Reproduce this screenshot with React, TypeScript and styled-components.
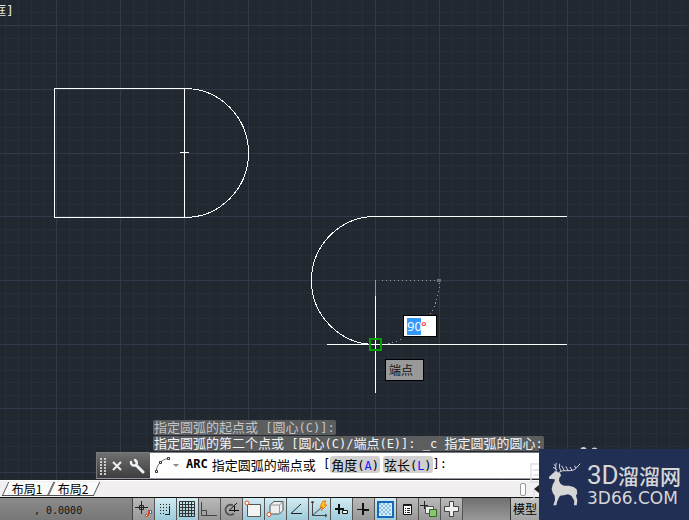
import React, { Fragment, ReactNode } from "react";
import styled, { createGlobalStyle, css } from "styled-components";

const cjk = `"Noto Sans CJK SC", sans-serif`;
const mono = `"DejaVu Sans Mono", "Noto Sans CJK SC", monospace`;

const GlobalStyle = createGlobalStyle`
  * { box-sizing: border-box; }
  body { margin: 0; background: #212830; font-family: ${cjk}; }
  button, input { font: inherit; color: inherit; margin: 0; padding: 0; border: 0; border-radius: 0; background: none; }
`;

const Window = styled.div`
  position: relative;
  display: flex;
  flex-direction: column;
  min-height: 100vh;
  overflow: hidden;
`;

const Canvas = styled.main`
  position: relative;
  flex: 1;
  background: #212830;
  overflow: hidden;
`;

const Drawing = styled.svg`
  position: absolute;
  inset: 0;
  width: 100%;
  height: 100%;
  shape-rendering: crispEdges;
  fill: none;
`;

const ViewLabel = styled.div`
  position: absolute;
  top: 2px;
  left: -7px;
  font: 13px/17px ${mono};
  color: #e4e4e4;
  white-space: nowrap;
`;

const AngleField = styled.label`
  position: absolute;
  left: 403px;
  top: 315px;
  display: flex;
  align-items: center;
  width: 34px;
  height: 22px;
  padding-left: 3px;
  border: 1px solid #000;
  background: #fff;
  color: #f00;
  font: 13px/17px "Open Sans", sans-serif;
`;

const AngleInput = styled.input`
  width: 14px;
  height: 17px;
  background: #3399ff;
  color: #fff;
  font: 13px/17px "Open Sans", sans-serif;
`;

const Tooltip = styled.div`
  position: absolute;
  left: 385px;
  top: 359px;
  width: 39px;
  height: 22px;
  padding-left: 3px;
  border: 1px solid #000;
  background: #999;
  color: #111;
  font: 12px/20px ${cjk};
`;

const CommandDock = styled.section`
  position: absolute;
  left: 96px;
  right: 148px;
  bottom: 1px;
  display: flex;
  flex-direction: column;
  align-items: flex-start;
  gap: 1px;
`;

const HistoryLine = styled.div<{ $dim?: boolean }>`
  margin-left: 57px;
  padding: 0 1px;
  height: 15px;
  border-radius: 2px;
  background: #5b5d5f;
  color: ${(p) => (p.$dim ? "#c4c4c4" : "#f4f4f4")};
  font: 13px/14px ${cjk};
  white-space: pre;
`;

const Latin = styled.span`
  font-family: ${mono};
  font-size: 12px;
`;

const CommandBar = styled.div`
  display: flex;
  align-self: stretch;
  height: 27px;
  border: 1px solid #77797c;
  border-bottom-color: #999;
  background: #fff;
  color: #000;
  font: 13px/17px ${cjk};
`;

const CommandTools = styled.div`
  display: flex;
  flex: none;
  align-items: center;
  gap: 6px;
  width: 53px;
  padding-left: 3px;
  background: linear-gradient(#707070, #3c3c3c);
`;

const IconButton = styled.button`
  display: flex;
  align-items: center;
  justify-content: center;
`;

const Prompt = styled.div`
  display: flex;
  flex: 1;
  min-width: 0;
  align-items: center;
  padding: 0 0 2px 4px;
  white-space: pre;
`;

const CommandName = styled(Latin)`
  margin: 0 4px 0 6px;
`;

const Option = styled.button`
  height: 17px;
  padding: 0 1px;
  margin-right: 3px;
  border-radius: 3px;
  background: #d0d0d0;
  &:last-of-type { margin-right: 0; }
  b { font-weight: 400; color: #1a1aff; }
`;

const CommandInput = styled.input`
  flex: 1;
  min-width: 0;
`;

const TabStrip = styled.nav`
  display: flex;
  justify-content: space-between;
  height: 18px;
  padding-left: 5px;
  border-top: 1px solid #fff;
  border-bottom: 1px solid #111;
  background: #f1eff0;
`;

const Tabs = styled.div`
  display: flex;
`;

const Tab = styled.button`
  position: relative;
  width: 46px;
  height: 15px;
  padding-right: 2px;
  color: #000;
  font: 12px/14px ${cjk};
  z-index: 0;
  &::before {
    content: "";
    position: absolute;
    z-index: -1;
    inset: 1px 0 0 0;
    border: solid #555;
    border-width: 0 1px 1px 1px;
    background: #fafafa;
    transform: skewX(-25deg);
  }
`;

const ScrollEnd = styled.div`
  display: flex;
  align-items: center;
  gap: 8px;
  margin-right: 150px;
`;

const ScrollThumb = styled.span`
  width: 6px;
  height: 13px;
  border: 1px solid #999;
  border-radius: 2px;
  background: #fff;
`;

const StatusBar = styled.footer`
  display: flex;
  height: 22px;
  background: linear-gradient(#777, #949494);
`;

const Coordinates = styled.output`
  width: 133px;
  padding-left: 34px;
  border-right: 1px solid #444;
  background: linear-gradient(#8b8b8b, #777);
  color: #111;
  font: 10px/25px ${mono};
  white-space: pre;
`;

const Toggle = styled.button<{ $on?: boolean }>`
  display: flex;
  align-items: center;
  width: 22px;
  border-right: 1px solid #555;
  ${(p) =>
    p.$on
      ? css`background: linear-gradient(#d3ebf2, #9dcbda);`
      : css`background: linear-gradient(#b9b9b9, #989898);`}
`;

const ToggleIcon = styled.svg`
  width: 20px;
  height: 20px;
  flex: none;
  fill: none;
  stroke: #222;
`;

const Spacer = styled.div`
  width: 48px;
  border-right: 1px solid #333;
  background: linear-gradient(#707070, #999);
`;

const ModelButton = styled.button`
  width: 28px;
  background: linear-gradient(#c4c4c4, #a4a4a4);
  color: #000;
  font: 12px/22px ${cjk};
`;

const Brand = styled.aside`
  position: absolute;
  right: 0;
  bottom: 0;
  display: flex;
  align-items: center;
  gap: 6px;
  width: 150px;
  height: 71px;
  padding-left: 9px;
  background: #222f55;
  color: #d6d6d6;
`;

const BrandEdge = styled.svg`
  position: absolute;
  right: 100%;
  top: 14px;
`;

const BrandText = styled.div`
  display: flex;
  flex-direction: column;
  white-space: nowrap;
`;

const BrandName = styled.div`
  display: flex;
  align-items: center;
  height: 26px;
  font: 500 21px/24px ${cjk};
  span { width: 31px; font: 26px/24px Roboto, sans-serif; }
`;

const BrandSite = styled.div`
  font: 17px/20px "DejaVu Sans", sans-serif;
`;

const STEP = 12.76;
const gridLines = (count: number, origin: number, first: number) =>
  Array.from({ length: count }, (_, i) => i + first).map((n) => ({
    at: Math.round(origin + n * STEP) + 0.5,
    major: n % 5 === 0,
  }));
const columns = gridLines(160, 56.2, -4);
const rows = gridLines(120, 25, -1);

const GridLines = ({ major }: { major: boolean }) => (
  <g stroke={major ? "#32394a" : "#272e39"}>
    {rows.filter((r) => r.major === major).map((r) => (
      <line key={`r${r.at}`} x1="0" x2="100%" y1={r.at} y2={r.at} />
    ))}
    {columns.filter((c) => c.major === major).map((c) => (
      <line key={`c${c.at}`} y1="0" y2="100%" x1={c.at} x2={c.at} />
    ))}
  </g>
);

const Model = () => (
  <Drawing aria-label="Drawing area">
    <GridLines major={false} />
    <GridLines major />
    <g stroke="#fff">
      <path d="M184.5 88.5H54.5V217.5H184.5V88.5M180 152.5H189" />
      <path d="M184.5 88.5A64 64.5 0 0 1 184.5 217.5" />
      <path d="M567 216.5H375.5A64 64 0 0 0 375.5 344.5M327 344.5H567M375.5 296V393" />
    </g>
    <path d="M375.5 280V296" stroke="#999" />
    <path d="M382 280.5H437" stroke="#999" strokeDasharray="1 3" />
    <path d="M439.5 283A64 64 0 0 1 380 344.5" stroke="#999" strokeDasharray="1 3" />
    <circle cx="439" cy="280.5" r="2" fill="#6b6f76" />
    <rect x="370" y="339" width="11" height="11" stroke="#00a000" strokeWidth="2" />
    <g fill="#ccc" shapeRendering="auto">
      <ellipse cx="583.5" cy="449.5" rx="3" ry="2.5" />
      <ellipse cx="594.5" cy="450" rx="3" ry="2.5" />
    </g>
  </Drawing>
);

/* Latin runs are set in the monospaced face, Chinese runs in the CJK one. */
const Mixed = ({ text }: { text: string }) => (
  <>
    {text.split(/([\u4e00-\u9fff]+)/).map((run, i) =>
      i % 2 ? <Fragment key={i}>{run}</Fragment> : run && <Latin key={i}>{run}</Latin>
    )}
  </>
);

const toggles: { label: string; on?: boolean; icon: ReactNode }[] = [
  { label: "推断约束", icon: <><path d="M2 8.5h13M8.5 2v13" /><path d="M6.5 6.5h4v4h-4z" /><path d="M15.5 11v6" stroke="#d04a20" /><path d="M16.5 11.5h2v3h-2z" stroke="#1f6fc4" fill="#fff" /><path d="M12.5 15.5h2v2h-2z" stroke="#d04a20" fill="#fff" /></> },
  { label: "捕捉模式", on: true, icon: <><path d="M5 5.5h11M5 8.5h8M5 11.5h8M5 14.5h5" strokeDasharray="1 2" /><path d="M14.5 7v8M10 15.5h5" /></> },
  { label: "栅格显示", on: true, icon: <path d="M2.5 2.5h15v15h-15zM5.5 2v16M8.5 2v16M11.5 2v16M14.5 2v16M2 5.5h16M2 8.5h16M2 11.5h16M2 14.5h16" stroke="#333" /> },
  { label: "正交模式", icon: <path d="M2.5 3v13.5H18M2.5 11.5h5v5" stroke="#444" /> },
  { label: "极轴追踪", icon: <><path d="M12 6.5a5 5 0 1 0 1 8" stroke="#555" strokeWidth="2" /><path d="M8 11.5h10M8 11.5L16 4M13.5 7v6" stroke="#111" /></> },
  { label: "对象捕捉", on: true, icon: <><path d="M4.5 5.5h13v12h-13z" fill="#f3f3f3" stroke="#555" /><circle cx="4" cy="4" r="2" fill="#fff" stroke="#e2531b" /></> },
  { label: "三维对象捕捉", on: true, icon: <><path d="M5 6l4-3.5h9v9L14.5 15H5z" fill="#eee" stroke="#555" /><path d="M5 6h9.5v9M14.5 6L18 2.5" stroke="#999" /><circle cx="4" cy="15.5" r="2" fill="#fff" stroke="#e2531b" /></> },
  { label: "对象捕捉追踪", on: true, icon: <path d="M14 5L4 14.5h11" /> },
  { label: "动态 UCS", on: true, icon: <><path d="M3.5 2v14.5H18M3.5 16.5L13 8M2 4l1.5-2L5 4M16 15l2 1.5-2 1.5" stroke="#444" /><path d="M14 2l-3 6h3l-2 4 6-6h-3l2-4z" fill="#ffd21f" stroke="#e87a10" /></> },
  { label: "动态输入", on: true, icon: <><path d="M4 10h9M8 5v10" stroke="#111" strokeWidth="2" /><path d="M11.5 11.5h5v3h-5z" fill="#fff" stroke="#111" /></> },
  { label: "线宽", icon: <><path d="M4 10.5h6" stroke="#111" /><path d="M9 11h7M10 4v12" stroke="#111" strokeWidth="2" /></> },
  { label: "透明度", on: true, icon: <><path d="M3 3h15v15H3z" fill="#d9eefb" stroke="#1668b8" strokeWidth="2" /><path d="M4 5h12M4 9h12M4 13h12" stroke="#8dbfe0" strokeWidth="2" strokeDasharray="2 2" /><path d="M6 7h11M6 11h11M6 15h11" stroke="#8dbfe0" strokeWidth="2" strokeDasharray="2 2" /></> },
  { label: "快捷特性", icon: <><path d="M6.5 5.5h8v10h-8z" fill="#fff" stroke="#111" /><path d="M7 6.5h7" /><path d="M8 9.5h1M10 9.5h3M8 11.5h1M10 11.5h3M8 13.5h1M10 13.5h3" /></> },
  { label: "选择循环", icon: <><path d="M1 6.5h8M5.5 2v8" /><path d="M6.5 7.5h8v7h-8z" fill="#eee" stroke="#555" /><path d="M10.5 10.5h7v7h-7z" fill="#8bc56f" stroke="#2f6b18" /></> },
  { label: "注释监视器", icon: <path d="M8.5 2.5h4v5h5v5h-5v5h-4v-5h-5v-5h5z" fill="#eee" stroke="#444" /> },
];

const Deer = () => (
  <svg width="33" height="45" viewBox="0 0 99 135" fill="none" aria-hidden="true">
    <path
      fill="#d6d6d6"
      d="M3 45L13 35 20 30 20 26 27 30 35 32 39 38 38 43 34 47 33 56 38 66 48 71 63 71 77 75 86 82 88 94 84 101 88 115 86 130 78 130 79 116 70 101 60 97 47 100 36 101 31 110 27 120 25 130 16 130 21 114 20 101 14 92 11 80 14 68 20 57 20 52 12 51 4 51Z"
    />
    <path
      stroke="#d6d6d6"
      strokeWidth="3"
      d="M28 32Q20 21 25 3M24 13L17 7M26 22L15 16M33 31Q43 24 57 26 78 27 84 19 91 11 97 5M39 27Q32 19 35 5M49 26L41 11M61 26L53 13M72 25L66 15M83 20L80 11"
    />
  </svg>
);

export default function App() {
  return (
    <>
      <GlobalStyle />
      <Window>
        <Canvas>
          <Model />
          <ViewLabel>框]</ViewLabel>
          <AngleField>
            <AngleInput aria-label="角度" defaultValue="90" />°
          </AngleField>
          <Tooltip role="tooltip">端点</Tooltip>
          <CommandDock>
            <HistoryLine $dim><Mixed text="指定圆弧的起点或 [圆心(C)]:" /></HistoryLine>
            <HistoryLine><Mixed text="指定圆弧的第二个点或 [圆心(C)/端点(E)]: _c 指定圆弧的圆心:" /></HistoryLine>
            <CommandBar>
              <CommandTools>
                <svg width="6" height="18" stroke="#ccc" strokeWidth="2" strokeDasharray="2 1" aria-hidden="true">
                  <path d="M1 1v17M5 1v17" />
                </svg>
                <IconButton aria-label="关闭">
                  <svg width="10" height="10" stroke="#eee" strokeWidth="2"><path d="M1 1l8 8M9 1l-8 8" /></svg>
                </IconButton>
                <IconButton aria-label="自定义">
                  <svg width="18" height="16" fill="none" stroke="#eef3f8" strokeLinecap="round">
                    <path d="M9 8l6 6" strokeWidth="3" />
                    <path d="M3 4q0 4 4 3.5 2.500-1 1.500-4L7 2" strokeWidth="2.500" />
                  </svg>
                </IconButton>
              </CommandTools>
              <Prompt>
                <IconButton aria-label="最近使用的命令">
                  <svg width="26" height="18" fill="#fff" stroke="#333">
                    <path d="M2 15Q4 4 15 2" fill="none" stroke="#777" />
                    <path d="M1.500 14.500h2v2h-2zM5.500 5.500h2v2h-2zM13.500 1.500h2v2h-2z" />
                    <path d="M19 8h6l-3 3z" fill="#888" stroke="none" />
                  </svg>
                </IconButton>
                <CommandName as="strong">ARC</CommandName>
                <span>指定圆弧的端点或</span>
                <Latin> [</Latin>
                <Option>角度<Latin>(<b>A</b>)</Latin></Option>
                <Option>弦长<Latin>(<b>L</b>)</Latin></Option>
                <Latin>]:</Latin>
                <CommandInput aria-label="命令" />
              </Prompt>
            </CommandBar>
          </CommandDock>
        </Canvas>
        <TabStrip>
          <Tabs>
            <Tab>布局1</Tab>
            <Tab>布局2</Tab>
          </Tabs>
          <ScrollEnd>
            <ScrollThumb />
            <IconButton aria-label="向左滚动">
              <svg width="5" height="8" fill="#222"><path d="M5 0v8L0 4z" /></svg>
            </IconButton>
          </ScrollEnd>
        </TabStrip>
        <StatusBar>
          <Coordinates>, 0.0000</Coordinates>
          {toggles.map((t) => (
            <Toggle key={t.label} aria-label={t.label} aria-pressed={!!t.on} $on={t.on}>
              <ToggleIcon viewBox="0 0 20 20">{t.icon}</ToggleIcon>
            </Toggle>
          ))}
          <Spacer />
          <ModelButton>模型</ModelButton>
        </StatusBar>
        <Brand>
          <BrandEdge width="10" height="40" fill="none" stroke="#ddd" strokeWidth="2" opacity="0.7" aria-hidden="true">
            <path d="M10 1H2V19H10M4 7h6M4 12h6M5 27v8l-3 2" />
          </BrandEdge>
          <Deer />
          <BrandText>
            <BrandName><span>3D</span>溜溜网</BrandName>
            <BrandSite>3D66.COM</BrandSite>
          </BrandText>
        </Brand>
      </Window>
    </>
  );
}
